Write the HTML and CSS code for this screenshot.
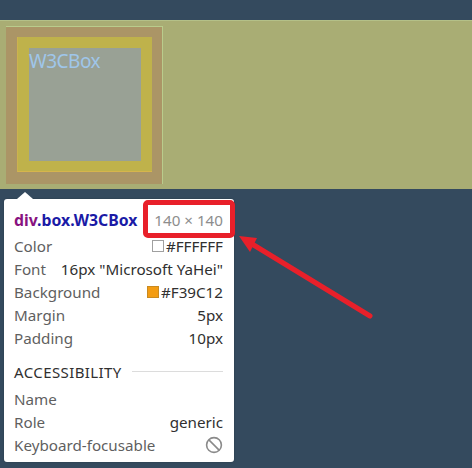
FILE: index.html
```html
<!DOCTYPE html>
<html>
<head>
<meta charset="utf-8">
<link rel="stylesheet" href="styles.css">
</head>
<body>
<div class="band">
  <div class="margin-box">
    <div class="padding-box">
      <div class="content-box">W3CBox</div>
    </div>
  </div>
</div>
<div class="tooltip">
  <div class="title-row">
    <span class="title"><span class="tag">div</span><span class="cls">.box.W3CBox</span></span>
    <span class="size">140 × 140</span>
  </div>
  <div class="row"><span class="label">Color</span><span class="value"><span class="swatch white"></span>#FFFFFF</span></div>
  <div class="row"><span class="label">Font</span><span class="value">16px "Microsoft YaHei"</span></div>
  <div class="row"><span class="label">Background</span><span class="value"><span class="swatch orange"></span>#F39C12</span></div>
  <div class="row"><span class="label">Margin</span><span class="value">5px</span></div>
  <div class="row"><span class="label">Padding</span><span class="value">10px</span></div>
  <div class="heading"><span>ACCESSIBILITY</span><span class="rule"></span></div>
  <div class="row first"><span class="label">Name</span><span class="value"></span></div>
  <div class="row"><span class="label">Role</span><span class="value">generic</span></div>
  <div class="row"><span class="label">Keyboard-focusable</span><span class="value">
    <svg class="no-icon" width="18" height="18" viewBox="0 0 18 18"><circle cx="9" cy="9" r="7.4" fill="none" stroke="#8a8a8a" stroke-width="1.6"/><line x1="3.9" y1="3.9" x2="14.1" y2="14.1" stroke="#8a8a8a" stroke-width="1.6"/></svg>
  </span></div>
</div>
<div class="highlight"></div>
<svg class="annot" width="472" height="468" viewBox="0 0 472 468">
  <line x1="370" y1="316" x2="252" y2="244" stroke="#e8202a" stroke-width="5" stroke-linecap="round"/>
  <polygon points="239,236 257,238 250,252" fill="#e8202a"/>
</svg>
</body>
</html>
```
FILE: styles.css
```css
html, body {
  margin: 0;
  padding: 0;
}
body {
  width: 472px;
  height: 468px;
  background: #344a5e;
  font-family: "Noto Sans", "Open Sans", sans-serif;
  position: relative;
  overflow: hidden;
}
.band {
  margin-top: 20px;
  height: 169px;
  background: #a9ad74;
  border-top: 1px solid #b4c088;
  box-sizing: border-box;
  padding: 5px 0 0 6px;
}
.margin-box {
  width: 157px;
  height: 158px;
  box-sizing: border-box;
  background: #ab9566;
  border-top: 1px solid #b9cc8c;
  border-right: 1px solid #b9cc8c;
  padding: 10px 10px 0 11px;
}
.padding-box {
  width: 135px;
  height: 135px;
  box-sizing: border-box;
  background: #bfb24b;
  border-bottom: 1px solid #d6b54c;
  border-left: 1px solid #cdb24e;
  padding: 11px 11px 0 11px;
}
.content-box {
  width: 112px;
  height: 113px;
  background: #99a195;
  color: #9fc6ea;
  font-family: "Noto Sans", "Open Sans", sans-serif;
  font-size: 19px;
  line-height: 26px;
  letter-spacing: -0.5px;
}
.tooltip {
  position: absolute;
  left: 4px;
  top: 199px;
  width: 230px;
  height: 263px;
  box-sizing: border-box;
  background: #fff;
  border-radius: 3px;
  padding: 9px 11px 0 10px;
  font-size: 15.2px;
  box-shadow: 0 0 2px rgba(0,0,0,0.25);
}
.tooltip::before {
  content: "";
  position: absolute;
  left: 13px;
  top: -7px;
  border-left: 8px solid transparent;
  border-right: 8px solid transparent;
  border-bottom: 7px solid #fff;
}
.title-row {
  display: flex;
  justify-content: space-between;
  align-items: center;
  height: 23px;
  margin-bottom: 3px;
}
.title {
  font-weight: bold;
  font-size: 15.8px;
}
.tag { color: #881280; }
.cls { color: #1a1aa6; }
.size {
  color: #8d8d8d;
  font-size: 15.2px;
}
.row {
  display: flex;
  justify-content: space-between;
  align-items: center;
  height: 23px;
}
.label { color: #5f5f5f; }
.value {
  color: #303030;
  display: flex;
  align-items: center;
}
.swatch {
  display: inline-block;
  width: 12px;
  height: 12px;
  margin-right: 2px;
  box-sizing: border-box;
  border: 1px solid #a0a0a0;
}
.swatch.white { background: #fff; }
.swatch.orange { background: #f39c12; border-color: #c98a20; }
.heading {
  display: flex;
  align-items: center;
  height: 23px;
  margin-top: 11px;
  margin-bottom: 4px;
  color: #303030;
  font-size: 15px;
  letter-spacing: 0.4px;
}
.rule {
  flex: 1;
  height: 1px;
  background: #dcdcdc;
  margin-left: 10px;
}
.no-icon {
  display: block;
  margin-right: 0;
}
.highlight {
  position: absolute;
  left: 143px;
  top: 200px;
  width: 92px;
  height: 38px;
  box-sizing: border-box;
  border: 5px solid #e8202a;
  border-radius: 5px;
}
.annot {
  position: absolute;
  left: 0;
  top: 0;
  pointer-events: none;
}
```
